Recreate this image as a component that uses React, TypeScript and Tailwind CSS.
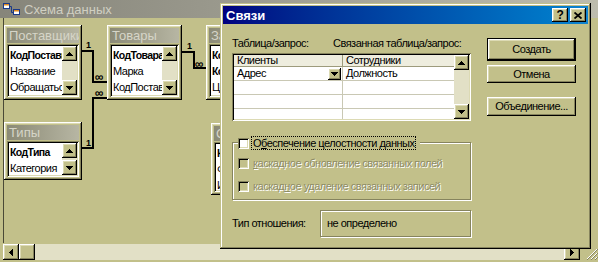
import React from 'react';

// olive "Win98" palette
const RAISED =
  'shadow-[inset_-1px_-1px_#000000,inset_1px_1px_#ffffff,inset_-2px_-2px_#86845e,inset_2px_2px_#dcdab4]';
const SUNKEN =
  'shadow-[inset_1px_1px_#86845e,inset_-1px_-1px_#ffffff,inset_2px_2px_#000000,inset_-2px_-2px_#dcdab4]';

type Dir = 'up' | 'down' | 'left' | 'right';

function Tri({ dir }: { dir: Dir }) {
  if (dir === 'up')
    return (
      <svg width="7" height="4" viewBox="0 0 7 4">
        <path d="M3 0h1v1h1v1h1v1h1v1H0V3h1V2h1V1h1z" fill="#000" />
      </svg>
    );
  if (dir === 'down')
    return (
      <svg width="7" height="4" viewBox="0 0 7 4">
        <path d="M0 0h7v1H6v1H5v1H4v1H3V3H2V2H1V1H0z" fill="#000" />
      </svg>
    );
  if (dir === 'left')
    return (
      <svg width="4" height="7" viewBox="0 0 4 7">
        <path d="M3 0h1v7H3V6H2V5H1V4H0V3h1V2h1V1h1z" fill="#000" />
      </svg>
    );
  return (
    <svg width="4" height="7" viewBox="0 0 4 7">
      <path d="M0 0h1v1h1v1h1v1h1v1H3v1H2v1H1v1H0z" fill="#000" />
    </svg>
  );
}

function ArrowBtn({ dir, className = '' }: { dir: Dir; className?: string }) {
  return (
    <div className={`flex items-center justify-center bg-[#c2c08a] shrink-0 ${RAISED} ${className}`}>
      <Tri dir={dir} />
    </div>
  );
}

function VScroll() {
  return (
    <div className="w-[15px] shrink-0 flex flex-col">
      <ArrowBtn dir="up" className="h-[15px]" />
      <div className="flex-1 bg-[#e2e0c6]" />
      <ArrowBtn dir="down" className="h-[15px]" />
    </div>
  );
}

type Row = { t: string; b?: boolean };

function TableBox({ title, rows, pos }: { title: string; rows: Row[]; pos: string }) {
  return (
    <div className={`absolute bg-[#c2c08a] p-[3px] flex flex-col ${RAISED} ${pos}`}>
      <div className="h-[15px] shrink-0 px-[2px] bg-linear-to-r from-[#8b8a76] to-[#b7b6a3] text-[#d6d5c8] text-[13px] tracking-normal leading-[15px] whitespace-nowrap overflow-hidden">
        {title}
      </div>
      <div className={`mt-[1px] flex-1 min-h-0 flex bg-white p-[2px] ${SUNKEN}`}>
        <div className="flex-1 min-w-0 flex flex-col pl-[1px] pt-[1px] overflow-hidden">
          {rows.map((r) => (
            <div
              key={r.t}
              className={`h-[16px] leading-[16px] whitespace-nowrap ${
                r.b ? 'font-bold text-[10.5px] tracking-[-0.6px]' : ''
              }`}
            >
              {r.t}
            </div>
          ))}
        </div>
        <VScroll />
      </div>
    </div>
  );
}

function RelIcon() {
  return (
    <svg width="17" height="14" viewBox="0 0 17 14">
      <rect x="0.5" y="1.5" width="6" height="5" fill="#fff" stroke="#1a3a8a" />
      <rect x="1" y="2" width="5" height="1.5" fill="#e08a20" />
      <rect x="10.5" y="7.5" width="6" height="5" fill="#fff" stroke="#1a3a8a" />
      <rect x="11" y="8" width="5" height="1.5" fill="#e08a20" />
      <path d="M6.5 4.5H8.5V10.5H10.5" fill="none" stroke="#1a3a8a" />
    </svg>
  );
}

function Check({ disabled }: { disabled?: boolean }) {
  return (
    <div
      className={`w-[11px] h-[11px] shrink-0 ${disabled ? 'bg-[#c2c08a]' : 'bg-white'} shadow-[inset_1px_1px_#86845e,inset_-1px_-1px_#ffffff,inset_2px_2px_#000000,inset_-2px_-2px_#dcdab4]`}
    />
  );
}

function GridRow({ a, b, dd, last }: { a?: string; b?: string; dd?: boolean; last?: boolean }) {
  return (
    <div className={`flex ${last ? 'flex-1' : 'h-[14px] border-b border-[#c9c8b4]'}`}>
      <div className="w-[109px] flex items-center border-r border-[#c9c8b4] pl-[3px]">
        <span className="flex-1">{a}</span>
        {dd && <ArrowBtn dir="down" className="w-[13px] h-[12px] mr-[1px]" />}
      </div>
      <div className="flex-1 flex items-center pl-[3px]">{b}</div>
    </div>
  );
}

function Btn({ children, def, className = '' }: { children: React.ReactNode; def?: boolean; className?: string }) {
  return (
    <div className={`${def ? 'border border-black' : ''} ${className}`}>
      <div className={`h-full flex items-center justify-center bg-[#c2c08a] ${RAISED}`}>{children}</div>
    </div>
  );
}

function Dialog() {
  return (
    <div className="absolute left-[220px] top-[3px] w-[371px] h-[246px] bg-[#c2c08a] p-[3px] flex flex-col shadow-[inset_-1px_-1px_#000000,inset_1px_1px_#c2c08a,inset_-2px_-2px_#86845e,inset_2px_2px_#ffffff]">
      <div className="h-[18px] shrink-0 flex items-center pl-[3px] pr-[2px] bg-linear-to-r from-[#000080] to-[#1084d0]">
        <span className="flex-1 text-white font-bold text-[13px] tracking-normal leading-none">Связи</span>
        <Btn className="w-[16px] h-[14px]">
          <span className="font-bold text-[12px] leading-none">?</span>
        </Btn>
        <Btn className="w-[16px] h-[14px] ml-[2px]">
          <svg width="8" height="7" viewBox="0 0 8 7">
            <path d="M0.5 0.5L7.5 6.5M7.5 0.5L0.5 6.5" stroke="#000" strokeWidth="1.8" />
          </svg>
        </Btn>
      </div>

      <div className="flex flex-1 pl-[9px] pt-[13px]">
        <div className="w-[239px] flex flex-col">
          <div className="flex h-[13px] leading-[13px] whitespace-nowrap">
            <span className="w-[101px] shrink-0">Таблица/запрос:</span>
            <span>Связанная таблица/запрос:</span>
          </div>

          {/* relation grid */}
          <div className={`mt-[3px] h-[68px] shrink-0 flex bg-white p-[2px] ${SUNKEN}`}>
            <div className="flex-1 flex flex-col">
              <div className="h-[12px] flex bg-[#eeedde] border-b border-[#9d9b7c] leading-[11px]">
                <div className="w-[109px] border-r border-[#9d9b7c] pl-[3px]">Клиенты</div>
                <div className="flex-1 pl-[3px]">Сотрудники</div>
              </div>
              <GridRow a="Адрес" b="Должность" dd />
              <GridRow />
              <GridRow />
              <GridRow last />
            </div>
            <VScroll />
          </div>

          {/* integrity group */}
          <div className="mt-[21px] h-[58px] shrink-0 border border-[#86845e] shadow-[inset_1px_1px_#ffffff,1px_1px_#ffffff] flex flex-col pl-[5px]">
            <div className="-mt-[7px] h-[14px] flex items-center w-fit bg-[#c2c08a] pr-[4px]">
              <Check />
              <span className="ml-[2px] px-[1px] h-[14px] leading-[12px] border border-dotted border-black whitespace-nowrap">
                О<u>б</u>еспечение целостности данных
              </span>
            </div>
            <div className="mt-[7px] h-[13px] flex items-center text-[#8e8c66] [text-shadow:1px_1px_0_#ffffff] whitespace-nowrap">
              <Check disabled />
              <span className="ml-[4px]">
                <u>к</u>аскадное обновление связанных полей
              </span>
            </div>
            <div className="mt-[10px] h-[13px] flex items-center text-[#8e8c66] [text-shadow:1px_1px_0_#ffffff] whitespace-nowrap">
              <Check disabled />
              <span className="ml-[4px]">
                каскад<u>н</u>ое удаление связанных записей
              </span>
            </div>
          </div>

          <div className="mt-[10px] h-[27px] flex items-center whitespace-nowrap">
            <span className="w-[88px] shrink-0">Тип отношения:</span>
            <div className="flex-1 h-full flex items-center pl-[6px] border border-[#86845e] shadow-[inset_1px_1px_#ffffff,1px_1px_#ffffff]">
              не определено
            </div>
          </div>
        </div>

        <div className="ml-[16px] w-[89px] flex flex-col">
          <Btn def className="mt-[1px] h-[23px]">
            Создать
          </Btn>
          <Btn className="mt-[4px] h-[18px]">Отмена</Btn>
          <Btn className="mt-[14px] h-[19px]">Объединение...</Btn>
        </div>
      </div>
    </div>
  );
}

export default function App() {
  return (
    <div className="relative w-[598px] h-[262px] overflow-hidden bg-[#c2c08a] font-['Liberation_Sans',Arial,sans-serif] text-[11px] tracking-[-0.5px] text-black flex flex-col">
      {/* outer window title */}
      <div className="h-[18px] shrink-0 flex items-center gap-[4px] pl-[3px] bg-linear-to-r from-[#86857a] to-[#bdbcae]">
        <RelIcon />
        <span className="text-[13px] tracking-normal leading-none text-[#d0cfc2]">Схема данных</span>
      </div>

      {/* relationship canvas */}
      <div className="relative flex-1 shadow-[inset_3px_0_0_#c2c08a,inset_4px_0_0_#4a4936]">
        <svg className="absolute left-0 top-0" width="598" height="230">
          <g fill="none" stroke="#000" strokeWidth="2">
            <path d="M82 33H93V64H107" />
            <path d="M107 80H93V130H82" />
            <path d="M182 34H194V50H206" />
          </g>
        </svg>
        <span className="absolute left-[86px] top-[23px] text-[9px] font-bold leading-none">1</span>
        <span className="absolute left-[86px] top-[121px] text-[9px] font-bold leading-none">1</span>
        <span className="absolute left-[187px] top-[24px] text-[9px] font-bold leading-none">1</span>
        <span className="absolute left-[95px] top-[53px] text-[12px] font-bold leading-none">∞</span>
        <span className="absolute left-[95px] top-[69px] text-[12px] font-bold leading-none">∞</span>
        <span className="absolute left-[195px] top-[40px] text-[12px] font-bold leading-none">∞</span>

        <TableBox
          title="Поставщики"
          pos="left-[4px] top-[7px] w-[78px] h-[75px]"
          rows={[{ t: 'КодПоставщика', b: true }, { t: 'Название' }, { t: 'ОбращатьсяК' }]}
        />
        <TableBox
          title="Товары"
          pos="left-[107px] top-[7px] w-[75px] h-[75px]"
          rows={[{ t: 'КодТовара', b: true }, { t: 'Марка' }, { t: 'КодПоставщика' }]}
        />
        <TableBox
          title="Заказано"
          pos="left-[206px] top-[7px] w-[80px] h-[75px]"
          rows={[{ t: 'КодЗаказа', b: true }, { t: 'КодТовара', b: true }, { t: 'Цена' }]}
        />
        <TableBox
          title="Типы"
          pos="left-[4px] top-[104px] w-[78px] h-[58px]"
          rows={[{ t: 'КодТипа', b: true }, { t: 'Категория' }]}
        />
        <TableBox
          title="Сотрудники"
          pos="left-[211px] top-[105px] w-[80px] h-[72px]"
          rows={[{ t: 'КодСотрудника', b: true }, { t: 'Фамилия' }, { t: 'Имя' }]}
        />
      </div>

      {/* horizontal scrollbar */}
      <div className="h-[19px] shrink-0 flex pl-[3px] pt-[1px] pb-[2px]">
        <ArrowBtn dir="left" className="w-[16px]" />
        <div className={`w-[16px] bg-[#c2c08a] ${RAISED}`} />
        <div className="flex-1 bg-[#e2e0c6]" />
        <ArrowBtn dir="right" className="w-[16px]" />
        <div className="w-[18px] flex items-end justify-end">
          <svg width="12" height="12" viewBox="0 0 12 12">
            <path d="M11 1L1 11M11 5L5 11M11 9L9 11" stroke="#fff" strokeWidth="1" />
            <path d="M12 1L1 12M12 5L5 12M12 9L9 12" stroke="#86845e" strokeWidth="1" />
          </svg>
        </div>
      </div>

      <Dialog />
    </div>
  );
}
